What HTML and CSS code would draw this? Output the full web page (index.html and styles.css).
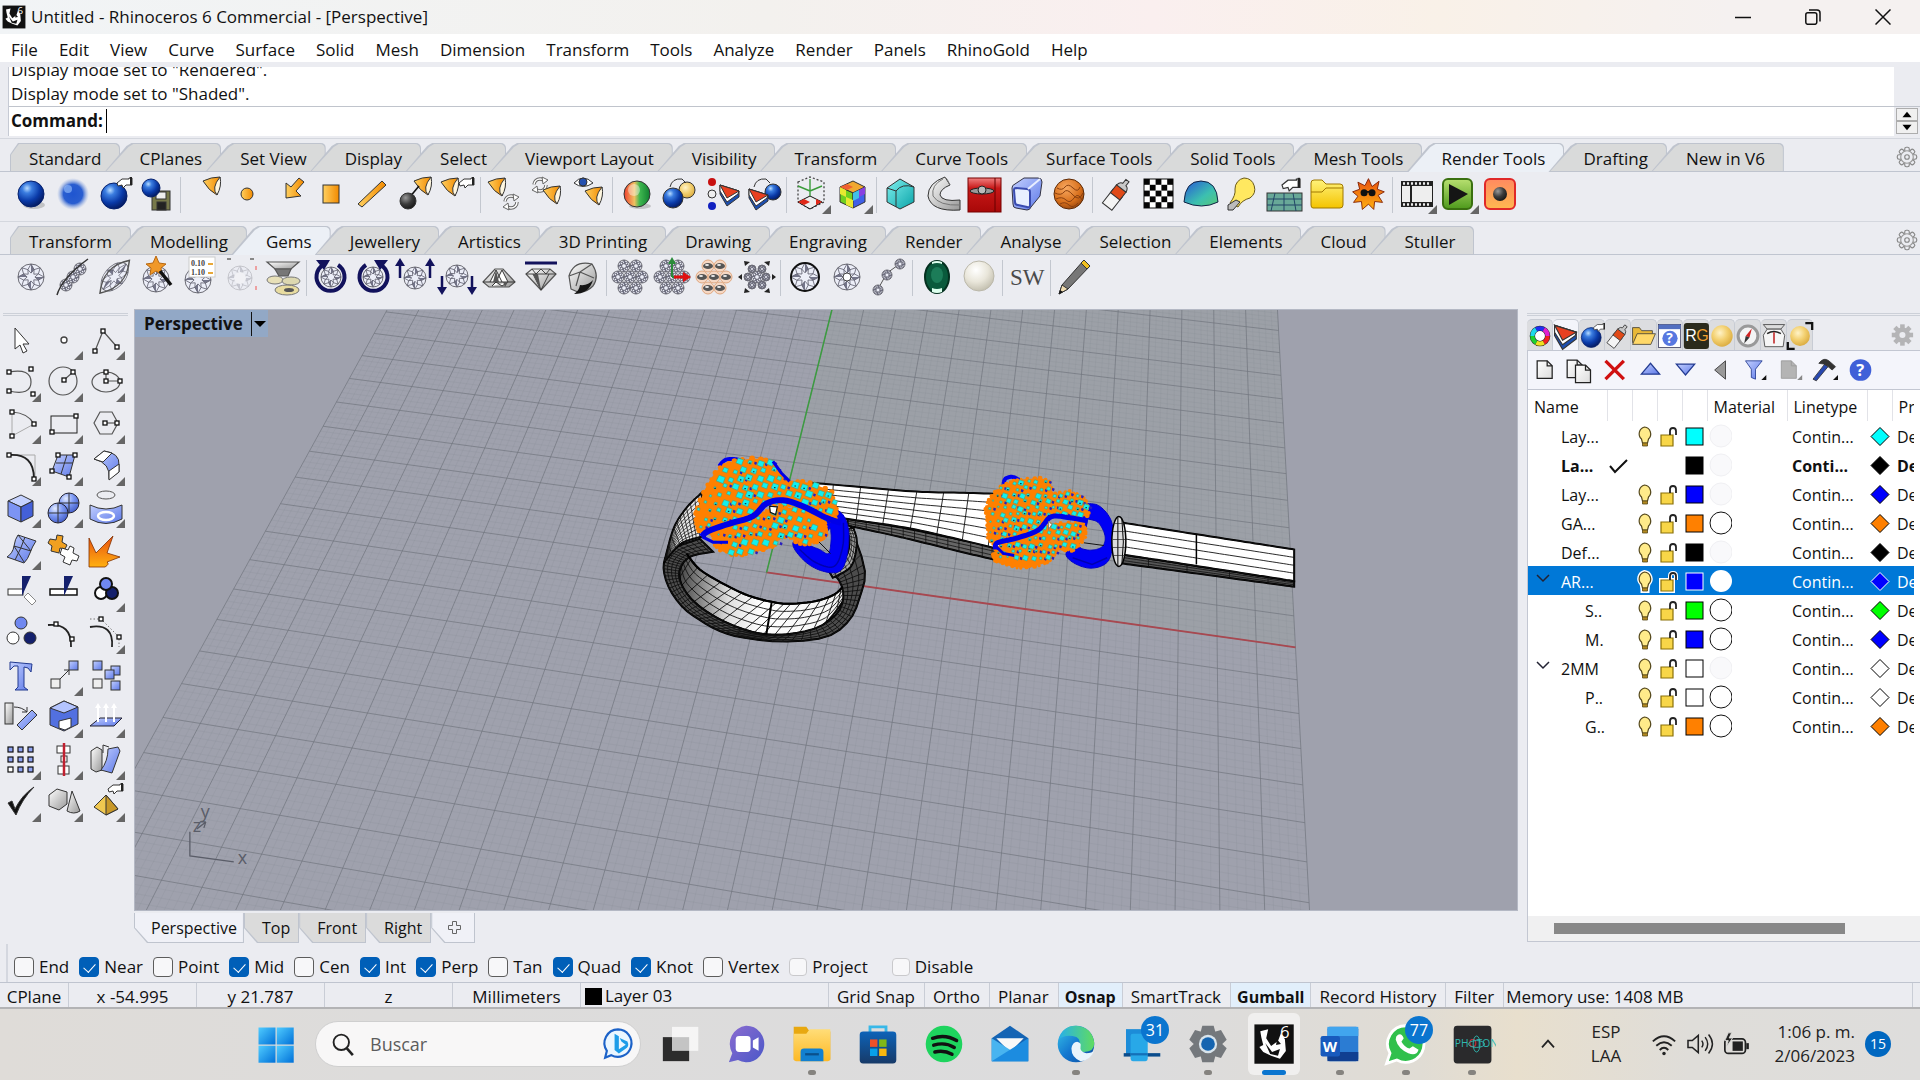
FILE: index.html
```html
<!DOCTYPE html>
<html lang="en">
<head>
<meta charset="utf-8">
<title>Untitled - Rhinoceros 6 Commercial - [Perspective]</title>
<link rel="stylesheet" href="styles.css">
</head>
<body>
<svg class="defs" aria-hidden="true">
  <defs>
    <radialGradient id="blue" cx=".35" cy=".28" r=".75"><stop offset="0" stop-color="#b8dcff"/><stop offset=".25" stop-color="#3b7de0"/><stop offset=".65" stop-color="#0a3aa8"/><stop offset="1" stop-color="#041a60"/></radialGradient>
    <radialGradient id="sky" cx=".35" cy=".28" r=".8"><stop offset="0" stop-color="#e4ecff"/><stop offset=".45" stop-color="#7f9bf5"/><stop offset="1" stop-color="#3d57c4"/></radialGradient>
    <radialGradient id="soft"><stop offset="0" stop-color="#1f55d0"/><stop offset=".6" stop-color="#2a5ed0"/><stop offset="1" stop-color="#8ea9dd" stop-opacity="0"/></radialGradient>
    <radialGradient id="gold" cx=".4" cy=".35" r=".7"><stop offset="0" stop-color="#fff3c8"/><stop offset=".5" stop-color="#f3d070"/><stop offset="1" stop-color="#d9a93c"/></radialGradient>
    <radialGradient id="pearl" cx=".4" cy=".3" r=".8"><stop offset="0" stop-color="#fff"/><stop offset=".5" stop-color="#e9e6da"/><stop offset="1" stop-color="#b9b5a4"/></radialGradient>
    <radialGradient id="dark" cx=".35" cy=".3" r=".8"><stop offset="0" stop-color="#999"/><stop offset=".5" stop-color="#3c3c3c"/><stop offset="1" stop-color="#111"/></radialGradient>
    <radialGradient id="clay" cx=".4" cy=".3" r=".8"><stop offset="0" stop-color="#f8a860"/><stop offset=".6" stop-color="#d8701c"/><stop offset="1" stop-color="#8a3c08"/></radialGradient>
    <linearGradient id="amber" x1="0" x2="1"><stop offset="0" stop-color="#ffd060"/><stop offset="1" stop-color="#f28a00"/></linearGradient>
    <linearGradient id="teal" x2="1" y2="1"><stop offset="0" stop-color="#7ff0ee"/><stop offset="1" stop-color="#0aa3a8"/></linearGradient>
    <linearGradient id="grey" x2="1" y2="1"><stop offset="0" stop-color="#fff"/><stop offset="1" stop-color="#989898"/></linearGradient>
    <linearGradient id="paper" x2="1" y2="1"><stop offset="0" stop-color="#fff"/><stop offset="1" stop-color="#dcdcdc"/></linearGradient>
    <linearGradient id="peri" x2="1" y2="1"><stop offset="0" stop-color="#c3d0ff"/><stop offset="1" stop-color="#5c78e8"/></linearGradient>
    <linearGradient id="red" y2="1" x2="0"><stop offset="0" stop-color="#f08080"/><stop offset=".3" stop-color="#c81818"/><stop offset="1" stop-color="#a80808"/></linearGradient>
    <linearGradient id="yellow" y2="1" x2="0"><stop offset="0" stop-color="#fff27a"/><stop offset="1" stop-color="#f4c400"/></linearGradient>
    <linearGradient id="green" y2="1" x2="0"><stop offset="0" stop-color="#b8e070"/><stop offset="1" stop-color="#4e9a1c"/></linearGradient>
    <linearGradient id="coral" y2="1" x2="0"><stop offset="0" stop-color="#ff8a60"/><stop offset="1" stop-color="#ffb850"/></linearGradient>
    <linearGradient id="dome" x2="1" y2="1"><stop offset=".1" stop-color="#2a68d0"/><stop offset=".6" stop-color="#3cc0b0"/><stop offset="1" stop-color="#58c878"/></linearGradient>
    <linearGradient id="rainbow" x2="1" y2="0"><stop offset="0" stop-color="#f04030"/><stop offset=".4" stop-color="#f0c060"/><stop offset=".6" stop-color="#40b850"/><stop offset="1" stop-color="#108030"/></linearGradient>
    <linearGradient id="fire" x2="0" y2="1"><stop offset="0" stop-color="#e85010"/><stop offset="1" stop-color="#ffb010"/></linearGradient>
    <linearGradient id="win" x2="1" y2="1"><stop offset="0" stop-color="#50ccff"/><stop offset="1" stop-color="#0070d8"/></linearGradient>
    <linearGradient id="chat" x2="1" y2="1"><stop offset="0" stop-color="#8c6cd0"/><stop offset="1" stop-color="#4a58c8"/></linearGradient>
    <linearGradient id="files" x2="0" y2="1"><stop offset="0" stop-color="#ffdd78"/><stop offset="1" stop-color="#fdb925"/></linearGradient>
    <linearGradient id="store" x2="0" y2="1"><stop offset="0" stop-color="#0d63b8"/><stop offset="1" stop-color="#173a68"/></linearGradient>
    <linearGradient id="edge" x2="1" y2="1"><stop offset="0" stop-color="#38c4e8"/><stop offset=".5" stop-color="#1478d0"/><stop offset="1" stop-color="#0c4ca0"/></linearGradient>
    <linearGradient id="edge2" x2="1" y2="0"><stop offset="0" stop-color="#28b0e8"/><stop offset="1" stop-color="#60dc60"/></linearGradient>
  </defs>
</svg>

<header class="titlebar">
  <span class="app-icon" data-icon="rhino"></span>
  <h1 class="title">Untitled - Rhinoceros 6 Commercial - [Perspective]</h1>
  <div class="window-buttons">
    <button aria-label="Minimize"><svg viewBox="0 0 16 16"><path d="M0 8.5h16"/></svg></button>
    <button aria-label="Restore"><svg viewBox="0 0 16 16"><rect x=".8" y="3.8" width="11" height="11.500" rx="2"/><path d="M4 1h8q3 0 3 3v8.500"/></svg></button>
    <button aria-label="Close"><svg viewBox="0 0 16 16"><path d="M.5 .5l15 15M15.500 .5l-15 15"/></svg></button>
  </div>
</header>

<nav class="menubar" aria-label="Main menu">
  <button>File</button><button>Edit</button><button>View</button><button>Curve</button><button>Surface</button><button>Solid</button><button>Mesh</button><button>Dimension</button><button>Transform</button><button>Tools</button><button>Analyze</button><button>Render</button><button>Panels</button><button>RhinoGold</button><button>Help</button>
</nav>

<section class="command" aria-label="Command history">
  <div class="history">
    <p>Display mode set to "Rendered".</p>
    <p>Display mode set to "Shaded".</p>
  </div>
  <div class="prompt">
    <label for="cmd">Command:</label>
    <input id="cmd" type="text" autocomplete="off">
    <div class="spin">
      <button aria-label="Previous"><svg viewBox="0 0 22 12"><path d="M6 9l5-6 5 6z"/></svg></button>
      <button aria-label="Next"><svg viewBox="0 0 22 12"><path d="M6 3l5 6 5-6z"/></svg></button>
    </div>
  </div>
</section>

<section class="bar">
  <div class="tabs">
    <button>Standard</button><button>CPlanes</button><button>Set View</button><button>Display</button><button>Select</button><button>Viewport Layout</button><button>Visibility</button><button>Transform</button><button>Curve Tools</button><button>Surface Tools</button><button>Solid Tools</button><button>Mesh Tools</button><button class="active">Render Tools</button><button>Drafting</button><button>New in V6</button>
    <span class="gear" data-icon="gear"></span>
  </div>
  <div class="tools" data-tools="sphere sphereSoft sphereHand sphereDisk | spot point arrowLight rectLight lineLight spotBall spotHand | spotRotate rotateSpot eyeSpot | sphereRgb twoSpheres dotsLayer layerSphere | axisBox+ colorCube+ | tealBlock pipe redBox tube clay | paint checker dome bulbBig gridHand folder sun | film+ play+ record"></div>
</section>

<section class="bar">
  <div class="tabs">
    <button>Transform</button><button>Modelling</button><button class="active">Gems</button><button>Jewellery</button><button>Artistics</button><button>3D Printing</button><button>Drawing</button><button>Engraving</button><button>Render</button><button>Analyse</button><button>Selection</button><button>Elements</button><button>Cloud</button><button>Stuller</button>
    <span class="gear" data-icon="gear"></span>
  </div>
  <div class="tools" data-tools="gem gemCurve gemLeaf gemWand gemList gemFaint gemStack | gemCcw gemCw gemUp gemDown gemSide gemLine gemDark | gemGrid gemAxis gemPave gemSpread | gemRing gemStar gemChain | emerald pearl | sw | pencil"></div>
</section>

<main class="workspace">
  <aside class="palette" aria-label="Tools">
    <div class="grip"></div>
    <div class="palette-grid" data-tools="cursor dot+ polyline+ curve+ circle+ ellipse+ arc+ rect+ polygon+ fillet+ surface+ bend+ box+ spheres+ revolve+ patch+ puzzle burst trim split group+ ungroup editPts ctrlPts+ text move+ copy rotate boolean+ extrude+ array+ align+ twist+ check+ solids+ pyramid+"></div>
  </aside>

  <section class="stage">
    <div class="view">
      <svg id="scene" viewBox="134 309 1385 602" preserveAspectRatio="xMinYMin slice" role="img" aria-label="Perspective viewport"></svg>
      <button class="view-title"><span>Perspective</span><svg viewBox="0 0 12 8"><path d="M0 1h12l-6 6z"/></svg></button>
    </div>
    <div class="view-tabs">
      <button class="active">Perspective</button><button>Top</button><button>Front</button><button>Right</button>
      <button class="add" aria-label="New viewport"><svg viewBox="0 0 16 16"><path d="M5.500 1.500h4v4h4v4h-4v4h-4v-4h-4v-4h4z"/></svg></button>
    </div>
  </section>

  <aside class="panel" aria-label="Layers">
    <div class="grip"></div>
    <div class="panel-tabs" data-tools="wheel layers* sphereHand paint openFolder helpWin rg goldBall compass scale goldFrame cog-"></div>
    <div class="panel-body">
      <div class="panel-tools" data-tools="page pages cross triUp triDown triLeft funnel pageGrey hammer help"></div>
      <div class="list">
        <table>
          <colgroup><col class="c-name"><col class="c-s"><col class="c-s"><col class="c-s"><col class="c-s"><col class="c-w"><col class="c-w"><col class="c-s"><col class="c-p"></colgroup>
          <thead><tr><th>Name</th><th></th><th></th><th></th><th></th><th>Material</th><th>Linetype</th><th></th><th>Pr</th></tr></thead>
          <tbody id="layers"></tbody>
        </table>
      </div>
      <div class="scroll"><div class="thumb"></div></div>
    </div>
  </aside>
</main>

<form class="osnap">
  <label><input type="checkbox">End</label>
  <label><input type="checkbox" checked>Near</label>
  <label><input type="checkbox">Point</label>
  <label><input type="checkbox" checked>Mid</label>
  <label><input type="checkbox">Cen</label>
  <label><input type="checkbox" checked>Int</label>
  <label><input type="checkbox" checked>Perp</label>
  <label><input type="checkbox">Tan</label>
  <label><input type="checkbox" checked>Quad</label>
  <label><input type="checkbox" checked>Knot</label>
  <label><input type="checkbox">Vertex</label>
  <label class="pale"><input type="checkbox">Project</label>
  <label class="pale"><input type="checkbox">Disable</label>
</form>

<footer class="status">
  <button class="w-cplane">CPlane</button>
  <span class="w-coord">x -54.995</span>
  <span class="w-coord">y 21.787</span>
  <span class="w-coord">z</span>
  <span class="w-coord">Millimeters</span>
  <span class="w-layer"><i class="chip"></i>Layer 03</span>
  <button>Grid Snap</button><button>Ortho</button><button>Planar</button><button class="on">Osnap</button><button>SmartTrack</button><button class="on">Gumball</button><button>Record History</button><button>Filter</button>
  <span class="w-memory">Memory use: 1408 MB</span>
</footer>

<nav class="taskbar" aria-label="Taskbar">
  <button class="start" aria-label="Start" data-icon="windows"></button>
  <div class="search"><span data-icon="magnifier"></span><input type="text" placeholder="Buscar" aria-label="Buscar"><span data-icon="bing"></span></div>
  <div class="apps">
    <button aria-label="Task view" data-icon="taskview"></button>
    <button aria-label="Chat" data-icon="chat"></button>
    <button aria-label="File Explorer" class="open" data-icon="explorer"></button>
    <button aria-label="Store" data-icon="store"></button>
    <button aria-label="Spotify" data-icon="spotify"></button>
    <button aria-label="Mail" data-icon="mail"></button>
    <button aria-label="Edge" class="open" data-icon="edge"></button>
    <button aria-label="Phone link" data-icon="phone"><b class="badge">31</b></button>
    <button aria-label="Settings" class="open" data-icon="settings"></button>
    <button aria-label="Rhinoceros" class="current" data-icon="rhinoBig"></button>
    <button aria-label="Word" class="open" data-icon="word"></button>
    <button aria-label="WhatsApp" class="open" data-icon="whatsapp"><b class="badge">77</b></button>
    <button aria-label="Photon" class="open" data-icon="photon"></button>
  </div>
  <div class="tray">
    <span data-icon="chevron"></span>
    <div class="lang">ESP<br>LAA</div>
    <div class="tray-icons"><span data-icon="wifi"></span><span data-icon="volume"></span><span data-icon="battery"></span></div>
    <div class="clock">1:06 p. m.<br>2/06/2023</div>
    <b class="count">15</b>
  </div>
</nav>
<script src="script.js"></script>
</body>
</html>
```
FILE: styles.css
```css
* { box-sizing: border-box; }
body {
  margin: 0; min-height: 100vh; display: flex; flex-direction: column;
  background: #ebecf1; color: #111;
  font: 17px/24px "Open Sans", "Noto Sans", sans-serif;
}
button, input { font: inherit; color: inherit; margin: 0; padding: 0; border: 0; background: none; }
h1, p { margin: 0; font: inherit; }
svg { display: block; }
.defs { position: absolute; width: 0; height: 0; }

.titlebar { display: flex; align-items: center; height: 34px; padding-left: 2px; background: linear-gradient(90deg, #f1f4f6, #f3f1ee 40%, #faefef 60%, #f9f1e8 75%, #f5f1f0 90%); }
.app-icon svg { width: 24px; height: 24px; }
.title { flex: 1; padding-left: 5px; }
.window-buttons { display: flex; padding-right: 2px; }
.window-buttons button { width: 70px; height: 34px; display: grid; place-items: center; }
.window-buttons svg { width: 16px; height: 16px; fill: none; stroke: #111; stroke-width: 1.500; }

.menubar { display: flex; height: 28px; background: #fff; }
.menubar button { padding: 3px 10px 0 11px; height: 28px; line-height: 24px; }

.command { margin-top: 5px; margin-left: 8px; border-left: 1px solid #c6cad4; }
.history { height: 39px; margin-right: 26px; padding-left: 2px; background: #fff; overflow: hidden; display: flex; flex-direction: column; justify-content: flex-end; }
.history p { flex: none; height: 24px; }
.prompt { display: flex; align-items: center; height: 30px; padding: 0 0 2px 2px; background: linear-gradient(90deg, #fff calc(100% - 26px), #ebecf1 0); border-top: 1px solid #c0c4cc; }
.prompt label { font-weight: bold; }
.prompt input { flex: 1; height: 24px; margin-left: 3px; border-left: 1px solid #000; outline: 0; }
.spin { display: flex; flex-direction: column; padding: 1px 2px 0; }
.spin button { width: 22px; height: 13px; border: 1px solid #adadad; background: #f0f0f0; }
.spin svg { width: 20px; height: 11px; }

.bar { border-top: 1px solid #d4d7de; padding-top: 4px; }
.command + .bar { margin-top: 2px; }
.tabs { display: flex; height: 29px; padding-left: 10px; border-bottom: 1px solid #c0c5d0; position: relative; }
.tabs button { position: relative; height: 29px; padding: 2px 19px 0 19px; z-index: 0; white-space: nowrap; }
.tabs button::before, .tabs button::after {
  content: ""; position: absolute; inset: 0 0 0 -16px; z-index: -1; border-radius: 0 5px 0 0;
  clip-path: polygon(0 100%, 22px 3px, 27px 0, 100% 0, 100% 100%); background: #bfc4ce;
}
.tabs button::after { inset: 1px 1px 1px -14px; background: #d9dada; }
.tabs button:first-child::before { left: 0; clip-path: polygon(0 100%, 0 40%, 8px 0, 100% 0, 100% 100%); }
.tabs button:first-child::after { left: 1px; clip-path: polygon(0 100%, 0 40%, 8px 0, 100% 0, 100% 100%); }
.tabs .active::after { background: #ecf0f6; bottom: 0; }
.gear { margin-left: auto; align-self: center; padding-right: 1px; }
.gear svg { width: 24px; height: 24px; }

.tools { display: flex; padding: 1px 0 6px 10px; height: 49px; }
.sep { width: 1px; height: 36px; margin: 4px 3px 0 2px; background: #c3c7cf; }
.tool { position: relative; width: 42px; height: 42px; flex: none; }
.tool svg { width: 42px; height: 42px; }
.flyout::after { content: ""; position: absolute; right: 1px; bottom: 1px; width: 9px; height: 9px; background: #666; clip-path: polygon(100% 0, 100% 100%, 0 100%); }

.workspace { flex: 1; display: flex; }
.palette { width: 134px; padding-top: 9px; }
.palette .grip { margin: 0 6px 3px 3px; }
.grip { height: 3px; border: 1px solid #ccd0d8; border-width: 1px 0; }
.palette-grid { display: grid; grid-template-columns: repeat(3, 42px); }

.stage { flex: 1; min-width: 0; display: flex; flex-direction: column; padding-top: 5px; }
.view { position: relative; flex: 1; min-height: 300px; background: #9fa1ad; border: 1px solid #b4b8c4; overflow: hidden; }
#scene { position: absolute; inset: 0; width: 100%; height: 100%; }
.view-title { position: absolute; left: 0; top: 0; display: flex; align-items: center; height: 27px; padding: 0 2px 0 9px; background: #92a8c6; font-weight: bold; }
.view-title span { padding-right: 8px; border-right: 1px solid #111; line-height: 24px; }
.view-title svg { width: 12px; height: 8px; margin-left: 2px; }
.view-tabs { display: flex; height: 33px; padding-top: 2px; font-size: 16px; }
.view-tabs button { position: relative; height: 30px; z-index: 0; padding: 0 9px 0 18px; }
.view-tabs button::before, .view-tabs button::after { content: ""; position: absolute; inset: 0; z-index: -1; clip-path: polygon(0 0, 100% 0, 100% 100%, 13px 100%, 0 50%); background: #bfc4ce; }
.view-tabs button::after { inset: 0 1px 1px 1px; background: #dbdbdb; }
.view-tabs .active { padding: 0 7px 0 17px; }
.view-tabs .active::after, .view-tabs .add::after { background: #f0f1f7; }
.view-tabs svg { width: 16px; height: 16px; fill: none; stroke: #666; }
.view-tabs .add { padding: 0 12px 0 16px; }

.panel { width: 402px; padding: 9px 0 2px 9px; display: flex; flex-direction: column; }
.panel .grip { margin-bottom: 3px; }
.panel-tabs { display: flex; height: 31px; }
.panel-tabs .tool { width: 26px; height: 31px; background: #dcdde0; border: 1px solid #c8ccd4; border-left: 0; border-bottom: 0; border-radius: 5px 5px 0 0; display: grid; place-items: center; }
.panel-tabs .tool svg { width: 32px; height: 32px; margin: 0 -4px; overflow: visible; }
.panel-tabs .tool.active { background: #f3f4fa; }
.panel-tabs .tool.end { margin-left: auto; background: none; border: 0; }
.panel-body { flex: 1; display: flex; flex-direction: column; border: 1px solid #c3c7d2; border-right: 0; background: #fff; }
.panel-tools { display: flex; height: 39px; border-bottom: 1px solid #c3c7d2; background: #f4f5fb; }
.panel-tools .tool { width: 35px; height: 38px; }
.panel-tools .tool svg { width: 35px; height: 38px; }
.list { flex: 1; overflow: hidden; margin-right: 5px; font-size: 16px; line-height: 22px; }
table { border-collapse: collapse; table-layout: fixed; width: 386px; }
.c-name { width: 79px; } .c-s { width: 25px; } .c-w { width: 80px; } .c-p { width: 22px; }
th, td { padding: 0; font-weight: normal; text-align: left; overflow: hidden; white-space: nowrap; }
th { height: 31px; padding: 2px 0 0 6px; border-right: 1px solid #e2e3e8; }
th:last-child { border: 0; }
td { height: 29px; padding: 2px 0 0 0; }
tr.bold td { font-weight: bold; }
tr.sel { background: #0078d7; color: #fff; }
td.name { padding-left: 33px; position: relative; }
td.child { padding-left: 57px; }
td.lt, td.pw { padding-left: 5px; }
td svg { width: 25px; height: 25px; }
td.name svg { position: absolute; left: 7px; top: 4px; width: 16px; height: 16px; }
.scroll { height: 25px; padding: 7px 75px 0 26px; background: #f0f0f1; }
.thumb { height: 11px; background: #888; }

.osnap { display: flex; gap: 10px; height: 38px; margin-left: 6px; padding: 8px 0 0 6px; align-items: center; border-left: 2px solid #d4d7df; }
.osnap label { display: flex; align-items: center; gap: 5px; white-space: nowrap; }
.osnap input { appearance: none; position: relative; width: 20px; height: 20px; border: 1px solid #5c5c5c; border-radius: 4px; background: #f7f7f9; }
.osnap input:checked { background: #005fb8; border-color: #005fb8; }
.osnap input:checked::after { content: ""; position: absolute; left: 6px; top: 3px; width: 6px; height: 10px; border: solid #fff; border-width: 0 1px 1px 0; transform: rotate(42deg); }
.osnap .pale { margin-right: 14px; }
.osnap .pale input { width: 18px; height: 18px; border-color: #c9c9cc; }

.status { display: flex; height: 27px; border-top: 1px solid #bfc4cf; border-bottom: 2px solid #b3b3b5; line-height: 24px; }
.status > * { border-right: 1px solid #c9cdd6; padding: 2px 9px 0 8px; white-space: nowrap; text-align: center; }
.status .w-cplane { width: 69px; padding: 2px 0 0; }
.status .w-coord { width: 128px; padding: 2px 0 0; }
.status .w-layer { display: flex; width: 248px; padding: 2px 0 0 4px; gap: 3px; align-items: center; }
.chip { width: 17px; height: 17px; background: #000; }
.status .on { background: #e2effb; font-weight: bold; padding: 2px 6px 0; font-size: 16px; }
.status .w-memory { flex: 1; padding: 2px 2px 0; text-align: left; margin-right: 7px; }

.taskbar { display: flex; align-items: center; height: 71px; padding: 0 29px 1px 250px; background: linear-gradient(90deg, #dfdcd8, #dddcdb 20%, #dcdcdd 60%, #e0dcd4 74%, #e8dfcd 79%, #dfddd9 88%, #dedddc); }
.start svg { width: 51px; height: 51px; }
.search { display: flex; align-items: center; width: 326px; height: 46px; margin-left: 14px; padding: 0 4px 0 9px; border: 1px solid #cfcfcf; border-radius: 23px; background: #f8f7f7; font-size: 18px; }
.search span svg { width: 36px; height: 36px; }
.search input { flex: 1; min-width: 0; padding-left: 9px; outline: 0; }
.search input::placeholder { color: #5c5c5c; opacity: 1; }
.apps { display: flex; margin-left: 6px; }
.apps button { position: relative; width: 66px; height: 62px; display: grid; place-items: center; }
.apps svg { width: 48px; height: 48px; }
.apps .open::after, .apps .current::after { content: ""; position: absolute; bottom: 0; left: 29px; width: 8px; height: 5px; border-radius: 3px; background: #85837f; }
.apps .current::before { content: ""; position: absolute; inset: 0 7px; border-radius: 6px; background: #f0efee; }
.apps .current svg { position: relative; }
.apps .current::after { left: 21px; width: 24px; background: #0a75cf; }
.badge { position: absolute; top: 3px; left: 32px; width: 28px; height: 28px; border-radius: 50%; background: #0a75cf; color: #fff; font: 16px/28px "Open Sans", sans-serif; }
.tray { display: flex; align-items: center; margin-left: auto; color: #222; line-height: 24px; }
.tray svg { width: 36px; height: 36px; }
.lang { width: 80px; text-align: center; }
.tray-icons { display: flex; padding-right: 11px; }
.clock { width: 90px; text-align: right; }
.count { width: 26px; height: 26px; margin-left: 10px; border-radius: 50%; background: #0067c0; color: #fff; font: 14px/26px "Open Sans", sans-serif; text-align: center; }
```
FILE: script.js
```js
/* ---------- icon drawing helpers (42 x 42 box) ---------- */
const K = 'stroke="#333" stroke-width="1"';
const C = (x, y, r, f, s = K) => `<circle cx="${x}" cy="${y}" r="${r}" fill="${f}" ${s}/>`;
const P = (d, f = 'none', s = K) => `<path d="${d}" fill="${f}" ${s}/>`;
const R = (x, y, w, h, f, s = K) => `<rect x="${x}" y="${y}" width="${w}" height="${h}" fill="${f}" ${s}/>`;
const G = (t, c) => `<g transform="${t}">${c}</g>`;
const N = '';
const node = (x, y) => R(x - 2, y - 2, 4, 4, '#fff', 'stroke="#111" stroke-width="1.3"');
const cone = (x, y) => G(`translate(${x} ${y})`, P('M0 4Q8 0 17 0L14 18Q6 14 0 4Z', 'url(#amber)') + P('M17 0Q8 11 14 18Q19 9 17 0Z', '#fff7e0'));
const hand = (x, y) => G(`translate(${x} ${y})`, P('M0 6l5-4h7v-1h3v7h-3l-3 0-3 3-1-3-4 1z', '#fff') + R(13, 0, 2, 8, '#222', N));
const rot = (x, y) => G(`translate(${x} ${y})`, `<circle cx="8" cy="8" r="6" fill="none" stroke="#666" stroke-width="3.500" stroke-dasharray="15 4"/><circle cx="8" cy="8" r="6" fill="none" stroke="#fff" stroke-width="1.500" stroke-dasharray="15 4"/>` + P('M10 0l6 3-5 4zM6 16l-6-3 5-4z', '#fff', 'stroke="#666"'));
const gem = (x, y, r) => {
  const o = (k, n = 8, ph = 0) => [...Array(n)].map((_, i) => { const a = (i + ph) * 2 * Math.PI / n; return [x + Math.cos(a) * r * k, y + Math.sin(a) * r * k].map(v => v.toFixed(1)).join(' '); });
  const a = o(1), b = o(.62, 8, .5), c = o(.3);
  let d = ''; for (let i = 0; i < 8; i++) d += `M${a[i]}L${b[i]}L${a[(i + 1) % 8]}M${b[i]}L${c[(i + 1) % 8]}L${b[(i + 1) % 8]}`;
  let w = ''; for (let i = 0; i < 8; i += 2) w += `M${a[i]}L${b[i]}L${c[i]}Z`;
  return C(x, y, r, '#eceef8', 'stroke="#6c6c74" stroke-width="1"') + P(w, '#74758a', N) + P(d, 'none', 'stroke="#5a5b6a" stroke-width=".8"');
};
const gems = (r, list) => list.map(([x, y]) => gem(x, y, r)).join('');
const hex = [[14, 10], [26, 10], [8, 21], [20, 21], [32, 21], [14, 32], [26, 32]];
const layers = (x, y, s = 1) => G(`translate(${x} ${y}) scale(${s})`, P('M0 0l19 6v6l-12 9-7-12z', '#1d4fb0') + P('M0 0l19 6-1 3-11 8-7-11z', '#fff') + P('M0 0l19 6-12 7z', '#e84020'));
const tube = G('translate(21 21) rotate(38)', P('M-6 -1h12v17h-12z', '#f4f4f4') + P('M-6 -7h12v10h-12z', '#e04a18') + P('M-6 -7q1-5 4-5v-5h4v5q3 0 4 5z', '#c8c8c8'));
const navy = 'stroke="#12125c" stroke-width="4"';
const thin = 'stroke="#555" stroke-width="1.2"';
const bulb = () => P('M12.500 3a7 7 0 0 1 4 12l-1 4h-5l-1-4a7 7 0 0 1 3-12z', '#ffeb8a', 'stroke="#55481c" stroke-width="1.2"') + P('M10.500 19h5v3h-5z', '#b48a20', 'stroke="#554818" stroke-width=".8"');
const sheet = (x, y, f = 'url(#paper)', s = 'stroke="#222" stroke-width="1.5"') => P(`M${x} ${y}h12l6 6v15h-18z`, f, s) + P(`M${x + 12} ${y}v6h6`, 'none', s);
const rhinoArt = R(1, 1, 40, 40, '#111', N) + P('M7 8l8-2-2 9 5 8 7-5 3-8 4 6 1 12-6 8-9-3-8-4-4-5 4-2-2-8z', '#fff', N) + P('M12 20l7 9 8-3-2 7-8-2zM24 16l4 5-5 1z', '#111', N) + '<text x="27" y="15" font-size="17" fill="#fff" font-family="Open Sans">6</text>';
const cubeB = (f1, f2, f3) => P('M8 14l13-6 12 6-12 6z', f1) + P('M8 14l13 6v15l-13-6z', f2) + P('M21 20l12-6v15l-12 6z', f3);

const ICONS = {
  rhino: rhinoArt, rhinoBig: G('translate(3 3) scale(.86)', rhinoArt),
  gear: G('translate(21 21)', [0, 45, 90, 135, 180, 225, 270, 315].map(a => `<rect x="-4" y="-17" width="8" height="8" rx="3" transform="rotate(${a})" fill="none" stroke="#888" stroke-width="2"/>`).join('') + C(0, 0, 11, '#ebecf1', 'stroke="#999" stroke-width="2"') + C(0, 0, 4, 'none', 'stroke="#888" stroke-width="2"')),
  cog: G('translate(15 21)', [0, 45, 90, 135, 180, 225, 270, 315].map(a => `<rect x="-3" y="-14" width="6" height="7" transform="rotate(${a})" fill="#b4b4b6"/>`).join('') + C(0, 0, 7, 'none', 'stroke="#b4b4b6" stroke-width="6"')),
  sphere: `<ellipse cx="24" cy="32" rx="11" ry="4" fill="#999" opacity=".5"/>` + C(21, 21, 13, 'url(#blue)', 'stroke="#05206c"'),
  sphereSoft: C(21, 21, 16, 'url(#soft)', N) + C(16, 16, 4, '#9cc4ff" opacity=".6', N),
  sphereHand: C(20, 23, 13, 'url(#blue)', 'stroke="#05206c"') + hand(23, 4),
  sphereDisk: R(16, 18, 18, 19, '#76784a') + R(20, 19, 10, 7, '#eee') + R(21, 29, 9, 8, '#222') + C(15, 15, 9, 'url(#blue)', 'stroke="#05206c"'),
  spot: cone(19, 4), point: C(21, 21, 6, 'url(#amber)'),
  arrowLight: P('M18 25V10l5 4 8-9 5 4-8 9 5 5z', 'url(#amber)'), rectLight: R(13, 12, 16, 18, 'url(#amber)'),
  lineLight: P('M6 31L30 8l4 4L10 34z', 'url(#amber)'),
  spotBall: cone(20, 4) + P('M15 25l10-12', 'none', 'stroke="#111" stroke-width="1.6"') + C(14, 28, 8, 'url(#dark)'),
  spotHand: cone(5, 5) + hand(23, 4), spotRotate: cone(4, 5) + rot(19, 21), rotateSpot: rot(6, 4) + cone(17, 13),
  eyeSpot: P('M6 10Q15 0 25 10Q15 17 6 10Z', '#fff') + C(15, 9, 4, '#2450b0') + cone(17, 14),
  sphereRgb: `<ellipse cx="24" cy="33" rx="11" ry="3" fill="#999" opacity=".5"/>` + C(21, 21, 13, 'url(#rainbow)') + C(18, 17, 6, '#fff" opacity=".4', N),
  twoSpheres: C(29, 17, 8, 'url(#gold)') + C(15, 25, 10, 'url(#blue)') + P('M12 14Q14 5 24 6l4 4', 'none'),
  dotsLayer: C(12, 9, 4, '#c81010', N) + C(12, 21, 4, '#eee') + C(12, 33, 4, '#1020c0', N) + layers(20, 12),
  layerSphere: C(31, 19, 8, 'url(#blue)') + P('M12 14Q14 5 24 6l4 4', 'none') + layers(7, 16),
  axisBox: P('M8 9l12-5 14 5v20l-14 7-12-7z', 'none', 'stroke="#444" stroke-dasharray="2 2" stroke-width="1.3"') + P('M8 29l12-6 12 6-12 7z', '#eee', 'stroke="#111"') + P('M14 26l6 3-6 3-6-3zM26 26l6 3-6 3z', '#e02818', N) + P('M20 23V6M20 18l-12-5M20 18l12-5', 'none', 'stroke="#3a9c3a" stroke-width="1.4"'),
  colorCube: cubeB('#f0a830', '#70d020', '#4060e8') + P('M8 14l6 3v7l-6-3zM14 24l7 3v8l-7-3z', '#e8e830', N) + P('M27 17l6-3v7l-6 3z', '#8840e0', N) + P('M21 20l6-3v8l-6 3z', '#40c0e8', N) + P('M15 11l6 3-6 3-7-3z', '#f06030', N),
  tealBlock: P('M7 15L20 6l14 8v15l-14 7-13-7z', 'url(#teal)') + P('M7 15l9 3q6-8 18-4M16 18v16', 'none'),
  pipe: P('M23 4q-17 6-17 19 3 16 32 14v-10q-18 2-20-5 0-6 10-10z', 'url(#grey)') + P('M23 4q2 1 5 8M21 6q-12 6-10 17 6 10 27 9', 'none', 'stroke="#777"'),
  redBox: R(4, 5, 33, 34, 'url(#red)', 'stroke="#700" stroke-width="1"') + P('M31 5v34', 'none', 'stroke="#600"') + `<ellipse cx="18" cy="18" rx="12" ry="3" fill="#999" stroke="#222"/><circle cx="18" cy="17" r="4" fill="#bbb" stroke="#222"/>`,
  tube: P('M6 15q0-3 3-4l9-6h14q4 0 4 4l-2 14-9 11q-1 3-4 3l-11-2q-3 0-3-4z', 'url(#peri)', 'stroke="#334"') + P('M8 17q0-2 2-2l11 1q3 0 3 3v13q0 3-3 2l-9-2q-3 0-3-3z', '#e8f0ff', 'stroke="#3a4cb0" stroke-width="2"') + P('M22 16l12-10', 'none', 'stroke="#e8eeff" stroke-width="2"'),
  clay: C(21, 21, 15, 'url(#clay)', 'stroke="#5a2806"') + P('M9 15q5 3 8-1t8 1 7-1M7 20q6 3 9-1t9 3 10-2M8 26q6-3 10 1t8-2 8 2M12 31q5-3 9 1t9-2', 'none', 'stroke="#8a4010"'),
  paint: tube,
  checker: R(6, 6, 29, 29, '#fff', 'stroke="#111"') + [0, 1, 2, 3, 4].map(i => [0, 1, 2, 3, 4].map(j => (i + j) % 2 ? '' : R(6 + i * 5.8, 6 + j * 5.8, 5.8, 5.8, '#050505', N)).join('')).join(''),
  dome: P('M4 29Q5 8 21 8t17 21q-16 8-34 0z', 'url(#dome)', 'stroke="#124"'),
  bulbBig: P('M22 5a11 11 0 0 1 6 20q-8 2-12 9l-8-4q6-8 5-14A11 11 0 0 1 22 5z', '#ffe860', 'stroke="#6a5a18"') + P('M14 27l-8 5 0 5 5 0 7-8z', '#bbb'),
  gridHand: R(3, 20, 35, 18, '#68a898') + P('M3 26h35M3 32h35M11 20l-4 18M20 20v18M29 20l3 18', 'none', 'stroke="#246" stroke-width="1"') + G('scale(1.2)', hand(15, 4)),
  folder: P('M5 10q0-3 3-3h8l4 4h14q3 0 3 3v18q0 3-3 3H7q-2 0-2-3z', 'url(#yellow)', 'stroke="#a07800"') + P('M5 19h11l4-4h17', 'none', 'stroke="#a07800"'),
  sun: G('translate(2 3) scale(.88)', P('M21 3l4 9 8-6-2 9 8 3-7 4 5 8-9-1-1 9-6-6-7 6-1-9-9 1 5-7-6-5 8-3-2-8 8 4z', 'url(#fire)', 'stroke="#801c00"') + C(16, 19, 4, '#111', N) + C(25, 19, 4, '#111', N) + P('M16 18h10', 'none', 'stroke="#111" stroke-width="2"')),
  film: R(5, 8, 32, 26, '#222', N) + R(6, 13, 30, 16, '#eee', N) + P('M7 10.500h28M7 31.500h28', 'none', 'stroke="#eee" stroke-width="2.500" stroke-dasharray="2 2"') + P('M15 13v16', 'none', 'stroke="#222" stroke-width="2"'),
  play: `<rect x="5" y="6" width="29" height="30" rx="5" fill="url(#green)" stroke="#3a7010" stroke-width="2"/>` + P('M11 11l19 10-19 11z', '#151515', N),
  record: `<rect x="5" y="6" width="30" height="30" rx="5" fill="url(#coral)" stroke="#e02828" stroke-width="2"/>` + C(20, 21, 7, 'url(#dark)', N),

  gem: gem(21, 21, 13), gemCurve: gems(6, [[14, 29], [21, 21], [28, 13]]) + P('M5 39Q10 22 36 3', 'none', 'stroke="#333" stroke-width="1.5"'),
  gemLeaf: G('rotate(-48 21 21) translate(0 8) scale(1 .6)', gem(21, 21, 17) + P('M-1 21Q21-6 43 21Q21 48-1 21z', 'none', 'stroke="#555" stroke-width="2"')),
  gemWand: gem(20, 23, 13) + P('M20 0l3 7 7 1-5 4 1 7-6-4-6 4 1-7-5-4 7-1z', '#f09828', 'stroke="#b86810"') + P('M24 15l11 14', 'none', 'stroke="#111" stroke-width="3.500"'),
  gemList: gem(20, 24, 13) + R(11, 1, 26, 20, '#fff', 'stroke="#ccc"') + '<text x="13" y="10" font-size="8" font-weight="bold" fill="#444" font-family="Liberation Serif">0.10</text><text x="13" y="19" font-size="8" font-weight="bold" fill="#444" font-family="Liberation Serif">1.10</text>' + P('M30 8h5M30 17h5', 'none', 'stroke="#e8a838" stroke-width="2"'),
  gemFaint: `<g opacity=".3">` + gem(20, 22, 12) + C(20, 22, 6, '#fff', N) + '</g>' + P('M36 10v4M36 30v4', 'none', 'stroke="#e88" stroke-width="1.5"') + P('M7 3h4M30 3h4', 'none', 'stroke="#888" stroke-width="2"'),
  gemStack: P('M5 6h32l-8 7H13z', 'url(#grey)', thin) + P('M13 13h16l-3 7h-9z', '#777', thin) + `<ellipse cx="13" cy="24" rx="8" ry="4" fill="#e8e0b8" stroke="#777"/><ellipse cx="29" cy="25" rx="9" ry="4" fill="#ddd8b0" stroke="#777"/><ellipse cx="25" cy="34" rx="12" ry="5" fill="#e8dca0" stroke="#777"/><ellipse cx="27" cy="34" rx="5" ry="2" fill="#555"/>`,
  gemCcw: gem(21, 21, 10) + P('M28 9A14 14 0 1 1 13 9', 'none', navy) + P('M6 4h14l-6 10z', '#12125c', N),
  gemCw: gem(21, 21, 10) + P('M14 9A14 14 0 1 0 29 9', 'none', navy) + P('M36 4H22l6 10z', '#12125c', N),
  gemUp: gem(21, 22, 11) + P('M6 22V7M36 22V7', 'none', 'stroke="#12125c" stroke-width="2.500"') + P('M1 10l5-8 5 8zM31 10l5-8 5 8z', '#12125c', N),
  gemDown: gem(21, 20, 11) + P('M6 20v14M36 20v14', 'none', 'stroke="#12125c" stroke-width="2.500"') + P('M1 31l5 8 5-8zM31 31l5 8 5-8z', '#12125c', N),
  gemSide: P('M5 26l12-13 8 0 12 13-6 5H11z', 'url(#grey)', thin) + P('M5 26h32M12 26l6-12 6 12M18 26l6-12 6 12M14 30l4-4 6 4 6-4', '#fff', 'stroke="#333" stroke-width="1"') + P('M18 14l3 12h-6zM25 26l5 0-3 5z', '#555', N),
  gemLine: P('M5 7h32', 'none', 'stroke="#12125c" stroke-width="3"') + P('M6 18l6-5h18l6 5-15 16z', 'url(#grey)', thin) + P('M6 18h30M13 18l8 16 8-16M12 13l4 5 5-5 5 5 4-5', 'none', 'stroke="#333" stroke-width=".9"') + P('M13 18h5l3 16z', '#555', N),
  gemDark: P('M7 20Q12 4 30 8q8 12 1 22-10 10-22 3z', 'url(#grey)', thin) + P('M31 24q-4 14-19 14 5-3 6-9 8 1 13-5z', '#151515', N) + P('M7 20l11-4 12-8M18 16l-4 14M18 16l14 6', 'none', thin),
  gemGrid: gems(6, hex), gemAxis: gems(6, hex) + P('M20 21V4M20 21h14', 'none', 'stroke="#2a8a3a" stroke-width="2"') + P('M22 21h10', 'none', 'stroke="#e01010" stroke-width="3"') + P('M31 16l8 5-8 5z', '#e01010', N) + P('M16 8l4-7 4 7z', '#2a8a3a', N),
  gemPave: hex.map(([x, y]) => C(x, y, 6, '#f6d8c4', 'stroke="#e0a880"') + `<ellipse cx="${x}" cy="${y}" rx="5" ry="3" fill="#555"/><ellipse cx="${x - 1}" cy="${y - 1}" rx="2" ry="1" fill="#eee"/>`).join(''),
  gemSpread: gem(21, 21, 6) + gems(4, [[12, 21], [30, 21], [16, 13], [26, 13], [16, 29], [26, 29]]) + P('M6 18v6l-4-3zM36 18v6l4-3zM8 5l6 1-5 4zM34 5l-6 1 5 4zM8 37l6-1-5-4zM34 37l-6-1 5-4z', '#222', N),
  gemRing: gem(21, 21, 14) + C(21, 21, 14, 'none', 'stroke="#111" stroke-width="2"'), gemStar: gem(21, 21, 13) + C(21, 21, 4, '#fff', 'stroke="#444"'),
  gemChain: P('M10 33l9-16 14-10', 'none', 'stroke="#555"') + gems(5, [[10, 34], [19, 19], [32, 8]]),
  emerald: `<ellipse cx="21" cy="21" rx="12" ry="16" fill="#0a5a3c" stroke="#04301f" stroke-width="2"/><ellipse cx="21" cy="19" rx="6" ry="8" fill="#1c7c58"/>` + P('M16 36q5 2 10 0v-4q-5 2-10 0zM16 6q5-2 10 0v2q-5-2-10 0z', '#dfe', N),
  pearl: C(21, 20, 15, 'url(#pearl)', 'stroke="#bbb8aa"'),
  sw: '<text x="4" y="29" font-size="23" fill="#4a4a4a" font-family="Liberation Serif">SW</text>',
  pencil: P('M5 38l3-9L30 4l6 6L14 33z', '#777', 'stroke="#333"') + P('M30 4l6 6-3 3-6-6z', '#f0c020') + P('M5 38l3-9 6 4z', '#f0dcb0') + P('M5 38l1-4 3 2z', '#111', N),

  cursor: P('M15 9v21l5-4 3 8 4-2-4-7h6z', '#fff'), dot: C(22, 21, 3, '#fff', 'stroke="#444" stroke-width="1.4"'),
  polyline: P('M11 32L19 12l14 16', 'none', thin) + node(11, 32) + node(19, 12) + node(33, 28),
  curve: P('M9 11q22-4 22 10t-22 9', 'none', thin) + node(9, 11) + node(9, 30) + node(31, 8) + node(33, 33),
  circle: C(21, 20, 14, 'none', thin) + P('M22 19l9-8', 'none', thin) + node(22, 19) + node(31, 11),
  ellipse: `<ellipse cx="22" cy="21" rx="14" ry="10" fill="none" stroke="#555" stroke-width="1.2"/>` + P('M22 11v9h14', 'none', thin) + node(22, 11) + node(22, 20) + node(36, 20),
  arc: P('M12 9q16 1 22 12', 'none', thin) + P('M12 9v24l22-12', 'none', 'stroke="#aaa"') + node(12, 9) + node(34, 21) + node(12, 33),
  rect: R(9, 13, 26, 17, 'none', 'stroke="#222"') + node(34, 13) + node(10, 29),
  polygon: P('M16 9h12l6 11-6 11H16l-6-11z', 'none', thin) + P('M21 20h12', 'none', thin) + node(21, 20) + node(33, 20),
  fillet: P('M9 10h26v24', 'none', 'stroke="#aaa"') + P('M9 10q25-2 25 24', 'none', 'stroke="#222" stroke-width="1.8"') + node(9, 10) + node(34, 34),
  surface: P('M16 10h17l-6 22-17-6z', 'url(#peri)') + P('M25 10l-6 19M14 18h17', 'none') + node(16, 10) + node(33, 10) + node(10, 26) + node(27, 32),
  bend: P('M10 14l10-8q16 2 15 14v7l-10 7q2-16-15-20z', 'url(#peri)') + P('M10 14l10-8 8 2-9 9zM25 26l10-7v8l-10 8z', '#fff'),
  box: cubeB('#c5d2ff', '#7c94f4', '#4460d8'),
  spheres: C(27, 16, 10, 'url(#sky)', 'stroke="#223"') + P('M17 16h20M27 6v20', 'none') + C(16, 26, 10, 'url(#sky)', 'stroke="#223"') + P('M6 26h20M16 16v20', 'none'),
  revolve: `<ellipse cx="22" cy="8" rx="9" ry="4" fill="none" stroke="#555"/>` + P('M6 18q16 8 32 0v14q-16 9-32 0z', 'url(#peri)') + '<ellipse cx="22" cy="29" rx="8" ry="4" fill="none" stroke="#fff" stroke-width="2.5"/>',
  patch: P('M18 6l18 6q-4 6-6 12t-6 10l-17-6q6-4 7-11t4-11z', 'url(#peri)') + P('M14 17l17 5M25 8q-4 12-10 23M18 6l13 16M14 17l10 16', 'none'),
  puzzle: P('M8 10l6 1 1-5 6 1-1 6 5 3-2 4-5-1-1 5-8-2 1-5-4-3z', '#f0a020') + P('M20 19l6 2 2-4 4 2-1 5 6 3-2 5-5-1-2 5-7-3 2-5-5-3z', '#fff'),
  burst: P('M5 9l7 15 17-17-6 17 13 4-13 5q3 2-2 5H5z', 'url(#fire)', 'stroke="#803000" stroke-width=".8"'),
  trim: R(8, 18, 15, 6, '#fff') + P('M22 5h9l-9 20z', '#14206c', N) + P('M24 26l4-4 8 8-4 4z', '#fff', 'stroke="#888"'),
  split: R(8, 18, 27, 6, '#fff', 'stroke="#111" stroke-width="1.5"') + P('M22 5h9l-9 20z', '#14206c', N),
  group: C(17, 22, 6, '#fff', 'stroke="#111" stroke-width="2"') + C(28, 22, 6, '#14206c', 'stroke="#111" stroke-width="2"') + C(22, 13, 6, '#7088f0', 'stroke="#111" stroke-width="2"'),
  ungroup: C(21, 10, 6, '#7088f0') + C(13, 25, 6, '#fff') + C(30, 25, 6, '#14206c'),
  editPts: P('M6 12q24-2 23 22', 'none', 'stroke="#222" stroke-width="1.8"') + node(14, 11) + node(30, 26),
  ctrlPts: P('M6 14q24-4 22 20', 'none', 'stroke="#222" stroke-width="1.8"') + P('M6 6h11l18 18v10', 'none', 'stroke="#777" stroke-dasharray="1.5 2"') + node(17, 6) + node(35, 24),
  text: P('M10 7l22 2-1 8-3-4-4-1v20l4 3H15l3-3V11l-4 0-4 4z', 'url(#peri)', 'stroke="#223a90"'),
  move: R(9, 24, 9, 9, '#eee') + R(27, 6, 9, 9, 'url(#peri)') + P('M18 24l9-9M22 15h5v5', 'none'),
  copy: R(9, 6, 9, 9, 'url(#peri)') + R(27, 11, 9, 9, 'url(#peri)') + R(21, 15, 9, 9, 'url(#peri)') + R(9, 24, 9, 9, '#eee') + R(27, 26, 9, 9, 'url(#peri)'),
  rotate: R(5, 6, 8, 21, 'url(#grey)') + P('M17 28L32 13l5 5L22 33z', 'url(#peri)') + P('M14 10q8 0 13 5M27 10v5h-5', 'none'),
  boolean: P('M8 11l14-7 14 6v17l-14 7-14-6z', '#5270e0') + P('M8 11l14-7 14 6-14 6z', '#b4c4ff') + P('M17 24l12-3v9l-6 3-6-2z', '#fff'),
  extrude: P('M6 29l10-8h22l-8 8z', 'url(#peri)', 'stroke="#223"') + P('M14 25V8M22 25V8M30 25V8', 'none', 'stroke="#fff" stroke-width="2"') + P('M11 11l3-5 3 5zM19 11l3-5 3 5zM27 11l3-5 3 5z', '#fff', N),
  array: [0, 1, 2].map(i => [0, 1, 2].map(j => R(8 + i * 10, 8 + j * 10, 5, 5, i === 0 && j === 2 ? '#fff' : '#90a4f4', 'stroke="#111" stroke-width="1.2"')).join('')).join(''),
  align: R(15, 7, 13, 7, '#fff') + R(19, 17, 6, 6, '#fff') + R(16, 27, 11, 8, '#fff') + P('M22 4v33', 'none', 'stroke="#c02030" stroke-width="2.500"'),
  twist: P('M7 12l6-4 5 3v20l-6 2-5-3z', 'url(#grey)') + P('M19 6v8M19 6l6 2', 'none') + P('M24 10l10-2 2 4-8 22-11-3q7-9 7-21z', 'url(#peri)'),
  check: P('M8 22l4-2 3 8Q22 14 34 6 22 18 16 34z', '#111'),
  solids: P('M7 14l8-6 10 3v12l-8 6-10-4z', 'url(#grey)') + P('M30 10l8 20q-6 4-13 0z', 'url(#grey)'),
  pyramid: P('M22 14l12 14-12 6-12-8z', '#f0c850') + P('M22 14l12 14-12 6z', '#c89828') + hand(24, 2),

  wheel: C(21, 21, 10, '#fff', 'stroke="#222" stroke-width="7"') + ['#f02020', '#f0e020', '#20d030', '#20d8e8', '#2030f0', '#e020d0'].map((c, i) => `<circle cx="21" cy="21" r="10" fill="none" stroke="${c}" stroke-width="5.5" pathLength="6" stroke-dasharray="1 5" stroke-dashoffset="${-i}"/>`).join(''),
  layers: layers(6, 7, 1.500), openFolder: P('M6 30V10h9l3 4h14v4', '#e8b838') + P('M6 32l6-14h24l-6 14z', '#ffd868'),
  helpWin: R(6, 6, 29, 30, '#fff', 'stroke="#335"') + R(6, 6, 29, 6, '#5470c0', N) + C(21, 24, 10, '#5878e0', N) + '<text x="16" y="30" font-size="18" font-weight="bold" fill="#fff" font-family="Open Sans">?</text>',
  rg: '<rect x="5" y="4" width="33" height="34" rx="4" fill="#2b2b1c"/><text x="7" y="27" font-size="21" fill="#fff" font-family="Liberation Sans">R<tspan fill="#f0a030" dx="-1">G</tspan></text>',
  goldBall: C(21, 21, 14, 'url(#gold)', N), compass: C(21, 21, 13, '#f4f4f4', 'stroke="#999" stroke-width="4"') + P('M26 11l-8 10 5 2z', '#d02020', N) + P('M16 31l2-10 5 2z', '#333', N),
  scale: P('M7 6h28l-5 6H12z', '#ddd') + P('M12 12h18l5 8-2 15H9L7 20z', '#f6f6f6') + P('M12 18q9-6 18 0', 'none', 'stroke="#222" stroke-width="2"') + P('M21 16v15', 'none', 'stroke="#c02020" stroke-width="2"'),
  goldFrame: C(21, 21, 13, 'url(#gold)', N) + P('M28 4h9v9M5 29v9h9', 'none', 'stroke="#111" stroke-width="3"'),
  page: sheet(11, 10), pages: sheet(5, 9) + sheet(15, 15), cross: P('M9 10l22 22M31 10L9 32', 'none', 'stroke="#d01010" stroke-width="4"'),
  triUp: P('M10 26l11-13 11 13z', 'url(#peri)', 'stroke="#223a90" stroke-width="1.5"'), triDown: P('M10 14l11 13 11-13z', 'url(#peri)', 'stroke="#223a90" stroke-width="1.5"'),
  triLeft: P('M27 10v22L14 21z', '#999'), funnel: P('M9 10h20l-8 10v12l-5-2V20z', 'url(#peri)', 'stroke="#223a90"') + P('M34 27v6h-6z', '#111', N),
  pageGrey: sheet(10, 10, '#b4b4b4', 'stroke="#999"') + P('M35 27v6h-6z', '#888', N), hammer: P('M6 32L20 14l4 3L10 34z', '#2848b0') + P('M13 13q6-8 12-3l8 7-4 4-6-5q-4-3-10-3z', '#333') + P('M36 27v6h-6z', '#111', N),
  help: C(21, 21, 13, '#4060d8', N) + '<text x="16" y="28" font-size="20" font-weight="bold" fill="#fff" font-family="Open Sans">?</text>',

  windows: R(7, 7, 14, 14, 'url(#win)', N) + R(22, 7, 14, 14, 'url(#win)', N) + R(7, 22, 14, 14, 'url(#win)', N) + R(22, 22, 14, 14, 'url(#win)', N),
  magnifier: C(19, 19, 9, 'none', 'stroke="#222" stroke-width="2.200"') + P('M25.500 26l7 8', 'none', 'stroke="#222" stroke-width="3"'),
  bing: P('M21 4a16 16 0 1 1-8 30l-7 3 2-8A16 16 0 0 1 21 4z', '#eaf6ff', 'stroke="#1c62c8" stroke-width="2.500"') + P('M17 9l5 3v15l8-5-5-4-2-4 9 4q3 6-3 9l-7 5-5-4z', '#1c9ce8', N),
  taskview: R(6, 15, 23, 21, '#2c2c2c', N) + R(14, 6, 23, 21, '#fff" opacity=".72', N),
  chat: P('M21 5a15.500 16 0 1 1-7 30l-8 2 3-8A16 16 0 0 1 21 5z', 'url(#chat)', N) + '<rect x="12" y="14" width="13" height="14" rx="3" fill="#fff"/>' + P('M27 18l5-3v12l-5-3z', '#fff', N),
  explorer: P('M5 6h11l3 4h18v25H5z', '#e8a810', N) + P('M5 12h11l3-4h18v26q0 2-2 2H7q-2 0-2-2z', 'url(#files)', N) + P('M11 36v-8q0-3 3-3h14q3 0 3 3v8z', '#1280d0', N) + P('M15 30h12', 'none', 'stroke="#0a508c" stroke-width="2"'),
  store: P('M14 11V6h14v5', 'none', 'stroke="#38b8e8" stroke-width="2.500"') + '<rect x="5" y="10" width="32" height="28" rx="3" fill="url(#store)"/>' + R(14, 17, 6.500, 6.500, '#f05028', N) + R(22, 17, 6.500, 6.500, '#80b818', N) + R(14, 25, 6.500, 6.500, '#08a0e8', N) + R(22, 25, 6.500, 6.500, '#f8b810', N),
  spotify: C(21, 21, 16, '#1ed45e', N) + P('M11 16q11-4 21 2M12 22q10-3 18 2M13 28q8-2 15 2', 'none', 'stroke="#111" stroke-width="3" stroke-linecap="round"'),
  mail: P('M5 16L21 5l16 11v20H5z', '#1464b4', N) + P('M9 16h24l-12 12z', '#f8f8f8', N) + P('M5 16l32 20H5z', '#48b4f0', N) + P('M37 16L5 36h32z', '#1c8ce0', N),
  edge: C(21, 21, 16, 'url(#edge)', N) + P('M6 17Q9 5 21 5q14 1 16 15 0 8-9 8-6 0-4-5 2-8-6-9-8-1-12 3z', 'url(#edge2)', N) + P('M25 23q-1 5 5 6 5 0 7-2-4 9-12 9-8-3-8-11 1-6 5-6 4 1 3 4z', '#e8f4fc', N),
  phone: R(7, 8, 17, 23, '#1c8cd8', N) + R(5, 29, 32, 3, '#0a4c8c', N) + '<rect x="11" y="12" width="15" height="24" rx="2" fill="#28a8e8"/>' + P('M11 30h15', 'none', 'stroke="#1470b8" stroke-width="2"'),
  settings: G('translate(21 21)', [0, 60, 120, 180, 240, 300].map(a => `<path d="M-5 -16h10l2 8h-14z" transform="rotate(${a})" fill="#74787c"/>`).join('') + C(0, 0, 12, '#74787c', N) + C(0, 0, 8, '#d8e4ec', N) + C(0, 0, 6, '#1464b0', N)),
  word: '<rect x="10" y="6" width="27" height="30" rx="2" fill="#2b7cd3"/>' + R(10, 6, 27, 8, '#41a5ee', N) + R(10, 28, 27, 8, '#103f91', N) + '<rect x="4" y="14" width="17" height="18" rx="2" fill="#185abd"/><text x="6" y="28" font-size="13" font-weight="bold" fill="#fff" font-family="Open Sans">W</text>',
  whatsapp: P('M21 5a16 16 0 1 1-8 30l-9 3 3-9A16 16 0 0 1 21 5z', '#30c04c', 'stroke="#fff" stroke-width="2.500"') + P('M14 13q3-2 5 3l-2 3q3 5 7 6l3-2 5 3q-2 6-9 3-9-4-11-12 0-3 2-4z', '#fff', N),
  photon: '<rect x="5" y="5" width="33" height="33" rx="3" fill="#2a2a2c"/><text x="6" y="24" font-size="9" fill="#30b8b0" font-family="Open Sans">PH<tspan fill="#e03040">O</tspan>TON</text>' + '<ellipse cx="25" cy="21" rx="7" ry="3" fill="none" stroke="#30b8b0" stroke-width=".8"/><ellipse cx="25" cy="21" rx="3" ry="7" fill="none" stroke="#30b8b0" stroke-width=".8"/>',
  chevron: P('M14 25l7-8 7 8', 'none', 'stroke="#222" stroke-width="2"'),
  wifi: P('M8 18q13-12 26 0M12 23q9-8 18 0M16 28q5-5 10 0', 'none', 'stroke="#222" stroke-width="2.200"') + C(21, 32, 2, '#222', N),
  volume: P('M7 17h5l7-6v20l-7-6H7z', 'none', 'stroke="#222" stroke-width="1.800"') + P('M23 17q3 4 0 8M27 13q6 8 0 16M31 10q9 11 0 22', 'none', 'stroke="#222" stroke-width="1.700"'),
  battery: '<rect x="8" y="15" width="24" height="17" rx="4" fill="none" stroke="#222" stroke-width="2"/><rect x="17" y="18" width="12" height="11" fill="#222"/><path d="M33 20h3v7h-3z" fill="#222"/><path d="M12 8l-4 9h4l-2 7 7-10h-4l3-6z" fill="#222" stroke="#e0dfdc"/>'
};
const icon = n => `<svg viewBox="0 0 42 42" aria-hidden="true">${ICONS[n] || ''}</svg>`;

document.querySelectorAll('[data-icon]').forEach(e => e.insertAdjacentHTML('afterbegin', icon(e.dataset.icon)));
/* suffixes: + has a fly-out, * is the active tab, - sits at the far end */
const MARKS = { '+': ' flyout', '*': ' active', '-': ' end' };
document.querySelectorAll('[data-tools]').forEach(box => {
  box.innerHTML = box.dataset.tools.split(' ').map(t => {
    if (t === '|') return '<span class="sep"></span>';
    const n = t.replace(/[-+*]/, '');
    return `<button class="tool${MARKS[t.slice(-1)] || ''}" aria-label="${n}">${icon(n)}</button>`;
  }).join('');
});

/* ---------- layer table ---------- */
const LAYERS = [
  ['Lay...', '#00ffff', 0], ['La...', '#000', 0, 'bold'], ['Lay...', '#0000ff', 0], ['GA...', '#ff8000', 1], ['Def...', '#000', 0],
  ['AR...', '#0000ff', 2, 'sel', 'open'], ['S..', '#00ff00', 1, '', 'child'], ['M.', '#0000ff', 1, '', 'child'],
  ['2MM', '#fff', 0, '', 'open'], ['P..', '#fff', 1, '', 'child'], ['G..', '#ff8000', 1, '', 'child']
];
const cell = c => `<td><svg viewBox="0 0 25 25">${c}</svg></td>`;
document.getElementById('layers').innerHTML = LAYERS.map(([name, col, mat, cls = '', kind = '']) => {
  const sel = cls === 'sel', edge = sel ? '#fff' : '#000', cur = cls === 'bold';
  const halo = c => (sel ? `<g stroke="#fff" stroke-width="4">${c.replace(/stroke(-width)?="[^"]*"/g, '')}</g>` : '') + c;
  const lock = P('M4 11h12v11H4z', '#f8d648', 'stroke="#8a7008" stroke-width="1.2"') + P('M13 11V7q0-3 3-3t3 3v4', 'none', 'stroke="#222" stroke-width="1.8"');
  return `<tr class="${cls}"><td class="name ${kind}">${kind === 'open' ? '<svg viewBox="0 0 16 16"><path d="M2 5l6 6 6-6" fill="none" stroke="#223" stroke-width="1.5"/></svg>' : ''}${name}</td>`
    + cell(cur ? P('M3 13l5 6L20 7', 'none', 'stroke="#111" stroke-width="2"') : '')
    + cell(cur ? '' : halo(bulb())) + cell(cur ? '' : halo(lock))
    + cell(R(4, 4, 17, 17, col, `stroke="${edge}"`))
    + cell(C(14, 12, 11, mat ? '#fff' : '#f9f9fb', mat === 1 ? 'stroke="#111"' : mat ? N : 'stroke="#f0f0f3"'))
    + '<td class="lt">' + (cur ? 'Conti...' : 'Contin...') + '</td>'
    + cell(P('M13 3.500l9 9-9 9-9-9z', col, `stroke="${edge}"`)) + '<td class="pw">De</td></tr>';
}).join('');

/* ---------- viewport scene ---------- */
const O = [767, 572], V1 = [-11292, -1134], V2 = [1200, -1170], gu = -.003007, gv = .0169;
const proj = (u, v) => { const w = 1 + gu * u + gv * v; return [0, 1].map(i => ((O[i] + gu * u * V1[i] + gv * v * V2[i]) / w).toFixed(1)).join(' '); };
const line = (a, b) => `M${a}L${b}`;
let minor = '', major = '';
for (let i = -70; i <= 70; i++) {
  const t = i / 5, d = line(proj(t, -14), proj(t, 14)) + line(proj(-14, t), proj(14, t));
  if (i % 5) minor += d; else major += d;
}
let out = `<path d="M134 309H1519V911H134Z" fill="#9fa1ad"/><path d="M${proj(0, 0)}L${proj(14, 0)}L${proj(14, 14)}L${proj(0, 14)}Z" fill="#8fa08f" opacity=".2"/>`
  + P(minor, 'none', 'stroke="#7f828c" stroke-width=".5" opacity=".28"') + P(major, 'none', 'stroke="#70747e" stroke-width=".7"')
  + P(line(proj(0, 0), proj(14, 0)), 'none', 'stroke="#a84850" stroke-width="1.800"') + P(line(proj(0, 0), proj(0, 14)), 'none', 'stroke="#3c9c40" stroke-width="1.500"');

/* point on a smooth curve through pts, t from 0 to 1 */
const sample = (pts, t) => {
  const n = pts.length - 1, s = Math.min(n - 1e-6, t * n), i = Math.floor(s), f = s - i;
  const p = k => pts[Math.max(0, Math.min(n, k))];
  return [0, 1].map(c => .5 * (2 * p(i)[c] + (p(i + 1)[c] - p(i - 1)[c]) * f + (2 * p(i - 1)[c] - 5 * p(i)[c] + 4 * p(i + 1)[c] - p(i + 2)[c]) * f * f + (3 * p(i)[c] - p(i - 1)[c] - 3 * p(i + 1)[c] + p(i + 2)[c]) * f * f * f));
};
const path = ps => 'M' + ps.map(p => p[0].toFixed(1) + ' ' + p[1].toFixed(1)).join('L');
const run = (f, n = 40) => [...Array(n + 1)].map((_, i) => f(i / n));
const mix = (a, b, k) => [a[0] + (b[0] - a[0]) * k, a[1] + (b[1] - a[1]) * k];
/* wireframe surface between two curves: n cross ribs, m lengthwise strips */
const loft = (map, A, B, n, m, fill, w = .8) => {
  A = A.map(map); B = B.map(map);
  let d = '';
  for (let j = 0; j <= m; j++) d += path(run(t => mix(sample(A, t), sample(B, t), j / m)));
  for (let i = 0; i <= n; i++) d += path(run(k => mix(sample(A, i / n), sample(B, i / n), k), 1));
  const edge = path(run(t => sample(A, t)).concat(run(t => sample(B, 1 - t)))) + 'Z';
  return P(edge, fill, 'stroke="#000" stroke-width="2"') + P(d, 'none', `stroke="#111" stroke-width="${w}"`);
};
const zr = p => [650 + p[0] / 3, 449 + p[1] / 3];
const zs = p => [640 + p[0] / 2.306, 429 + p[1] / 3];
out += '<defs><linearGradient id="inner"><stop offset="0" stop-color="#444"/><stop offset=".3" stop-color="#e0e0e0"/><stop offset=".5" stop-color="#fff"/><stop offset="1" stop-color="#f4f4f4"/></linearGradient></defs>';
/* unrolled strap */
out += loft(zs, [[480, 268], [600, 293], [720, 325], [830, 356]], [[480, 288], [600, 322], [720, 360], [830, 394]], 14, 3, '#666');
out += loft(zs, [[400, 160], [510, 172], [640, 186], [760, 190], [860, 194]], [[400, 252], [500, 272], [625, 297], [745, 332], [850, 366]], 8, 6, '#fff', .9);
out += loft(zs, [[1115, 375], [1512, 455]], [[1115, 402], [1512, 472]], 5, 3, '#555');
out += loft(zs, [[1118, 280], [1512, 360]], [[1115, 375], [1512, 455]], 1, 4, '#fff', .9) + P('M1197.700 534v30', 'none', 'stroke="#000" stroke-width="1.500"');
/* ring */
out += loft(zr, [[110, 312], [150, 360], [230, 408], [300, 440], [380, 460], [430, 463], [500, 455], [555, 435], [585, 405]], [[88, 365], [98, 415], [145, 468], [210, 510], [285, 541], [350, 555], [430, 553], [520, 528], [585, 450]], 18, 4, 'url(#inner)', .9);
out += loft(zr, [[190, 307], [130, 318], [100, 340], [88, 370], [95, 405], [130, 455], [200, 505], [280, 540], [350, 555], [430, 553], [510, 532], [565, 490], [582, 440], [570, 395], [550, 375]], [[150, 268], [80, 292], [48, 322], [42, 365], [60, 420], [100, 475], [150, 512], [210, 545], [280, 565], [400, 577], [530, 563], [600, 512], [632, 440], [646, 360], [605, 235]], 64, 4, '#4c4c4c', .9);
out += P(path(run(t => sample([[110, 312], [150, 360], [230, 408], [300, 440], [380, 460], [430, 463], [500, 455], [555, 435], [580, 412]].map(zr), t))), 'none', 'stroke="#000" stroke-width="2"') + P(path([[366, 460], [350, 555]].map(zr)), 'none', 'stroke="#000" stroke-width="2"');
out += loft(zr, [[155, 130], [110, 175], [72, 235], [45, 330]], [[165, 260], [130, 268], [90, 285], [45, 335]], 12, 9, '#e6e6e6', .8);
out += loft(zr, [[590, 240], [600, 270], [590, 320], [540, 368]], [[612, 235], [622, 280], [605, 350], [550, 385]], 12, 3, '#aaa', .8);
/* blue settings */
const blob = (map, pts) => path(run(t => sample(pts.concat([pts[0]]).map(map), t), 80)) + 'Z';
const blue = 'stroke="#0000c8" stroke-width="1"';
out += P(blob(zr, [[540, 170], [580, 195], [598, 250], [590, 330], [565, 368], [510, 362], [460, 330], [430, 280], [480, 250]]) + blob(zr, [[543, 235], [545, 270], [537, 312], [510, 300], [475, 282], [515, 262]]), '#0000f4', blue + ' fill-rule="evenodd"') + P('M818 540l13 13', 'none', 'stroke="#111"') + P(path(run(t => sample([[450, 300], [500, 340], [555, 350], [580, 290], [582, 220]].map(zr), t))), 'none', 'stroke="#0000b0" stroke-width="1.500"');
out += P(blob(zs, [[1025, 222], [1060, 228], [1088, 270], [1094, 330], [1082, 395], [1045, 416], [1005, 402], [985, 370], [1020, 320]]) + blob(zs, [[1035, 268], [1060, 280], [1075, 320], [1068, 352], [1040, 362], [1015, 350], [1028, 310]]), '#0000f4', blue + ' fill-rule="evenodd"');
out += P(path([[1026, 340], [1072, 348]].map(zs)), 'none', 'stroke="#111"') + P(path([[1000, 385], [1045, 405], [1080, 385]].map(zs)), 'none', 'stroke="#0000b0" stroke-width="1.500"');
out += P(path(run(t => sample([[208, 50], [225, 32], [250, 28], [285, 34]].map(zr), t))) + path(run(t => sample([[840, 165], [845, 147], [862, 142], [882, 155]].map(zs), t))), 'none', 'stroke="#0000f0" stroke-width="4"');
/* collar on the strap */
out += `<ellipse cx="1120" cy="541" rx="7" ry="25" fill="#ddd" stroke="#000" stroke-width="1.500"/><path d="M1119 517v49M1123 518q3 24 0 46" fill="none" stroke="#000"/><path d="M1115 523h11M1114 531h12M1114 539h13M1114 547h12M1114 555h12" stroke="#222" stroke-width=".7"/>`;

let seed = 7;
const rnd = () => (seed = (seed * 16807) % 2147483647) / 2147483647;
const inside = (p, poly) => { let c = false; for (let i = 0, j = poly.length - 1; i < poly.length; j = i++) { const a = poly[i], b = poly[j]; if ((a[1] > p[1]) !== (b[1] > p[1]) && p[0] < (b[0] - a[0]) * (p[1] - a[1]) / (b[1] - a[1]) + a[0]) c = !c; } return c; };
/* pave: orange prongs, cyan stones */
const pave = (map, pts, step, r) => {
  const poly = run(t => sample(pts.concat([pts[0]]).map(map), t), 60);
  let s = P(path(poly) + 'Z', '#ff8000', N);
  poly.forEach(p => { s += C((p[0] + rnd() * 2 - 1).toFixed(1), (p[1] + rnd() * 2 - 1).toFixed(1), (r * .6 + rnd()).toFixed(1), '#ff8000', N); });
  const xs = poly.map(p => p[0]), ys = poly.map(p => p[1]), x0 = Math.min(...xs), x1 = Math.max(...xs);
  let row = 0, cy = '', bl = '', dk = '';
  for (let y = Math.min(...ys) + 4; y < Math.max(...ys) - 3; y += step * .8, row++)
    for (let x = x0 + 3 + (row % 2) * step / 2; x < x1 - 2; x += step) {
      const q = [x + rnd() * 3 - 1.5, y + rnd() * 3 - 1.5];
      if (!inside(q, poly)) continue;
      const rim = (q[0] - x0) / (x1 - x0), k = r * (.65 + rnd() * .75) * (rim < .15 ? .5 : 1);
      cy += `M${(q[0] - k * .3).toFixed(1)} ${(q[1] - k).toFixed(1)}l${(k * 1.4).toFixed(1)} ${(k * .5).toFixed(1)}l${(-k * .5).toFixed(1)} ${(k * 1.4).toFixed(1)}l${(-k * 1.5).toFixed(1)} ${(-k * .6).toFixed(1)}z`;
      if (rnd() > .55) bl += `M${(q[0] + step / 2).toFixed(1)} ${(q[1] - 1).toFixed(1)}l2.500 1l-1 2.500l-2-1z`;
      if (rnd() > .75) dk += `M${(q[0] - .5).toFixed(1)} ${q[1].toFixed(1)}h1.500v1.200h-1.500z`;
    }
  return s + P(bl, '#2a20c0', N) + P(cy, '#10f0f0', 'stroke="#58a070" stroke-width=".7"') + P(dk, '#063c50', N);
};
out += pave(zr, [[140, 190], [165, 120], [205, 60], [255, 35], [340, 28], [380, 60], [415, 95], [465, 97], [540, 125], [560, 180], [540, 212], [470, 190], [400, 160], [350, 165], [310, 195], [230, 215], [165, 245], [142, 225]], 10, 3.2);
out += pave(zr, [[185, 248], [250, 225], [320, 200], [375, 175], [450, 180], [515, 210], [528, 245], [510, 272], [465, 282], [400, 262], [370, 290], [330, 300], [270, 318], [205, 298]], 10, 2.9);
out += P(path(run(t => sample([[155, 262], [175, 245], [240, 222], [310, 200], [350, 162], [400, 152], [460, 170], [530, 205], [575, 220]].map(zr), t))), 'none', 'stroke="#0000e8" stroke-width="6"') + P(path([[158, 262], [190, 278], [235, 278]].map(zr)) + path([[370, 35], [395, 70], [420, 95]].map(zr)), 'none', 'stroke="#0000e8" stroke-width="3"');
out += P(path([[360, 170], [383, 172], [378, 195], [362, 188]].map(zr)) + 'Z', '#fff', 'stroke="#111" stroke-width="1.2"');
out += pave(zs, [[800, 240], [815, 195], [845, 165], [880, 150], [940, 150], [955, 190], [1000, 188], [1028, 215], [1030, 260], [950, 258], [915, 300], [860, 325], [812, 340], [802, 290]], 8, 2.5);
out += pave(zs, [[835, 345], [900, 320], [945, 285], [1020, 282], [1028, 320], [1000, 360], [965, 362], [940, 398], [885, 415], [830, 400], [818, 380]], 8, 2.4);
out += P(path(run(t => sample([[822, 360], [826, 340], [870, 326], [920, 302], [950, 262], [990, 264], [1035, 274]].map(zs), t))), 'none', 'stroke="#0000e8" stroke-width="5"') + P(path([[822, 350], [840, 372], [865, 378]].map(zs)), 'none', 'stroke="#0000e8" stroke-width="3"');
out += P(path([[945, 275], [952, 285], [944, 300]].map(zs)) + 'Z', '#fff', 'stroke="#777"');
/* world axis marker */
out += P('M189 832v24l44 6M196 829l9-7M205 822l-6 0M205 822l-2 6', 'none', 'stroke="#5a5d68" stroke-width="1.300"');
out += '<g fill="#5a5d68" font-family="Open Sans" font-size="18"><text x="237" y="864">x</text><text x="200" y="818">y</text><text x="192" y="832">z</text></g>';
document.getElementById('scene').innerHTML = out;
```
